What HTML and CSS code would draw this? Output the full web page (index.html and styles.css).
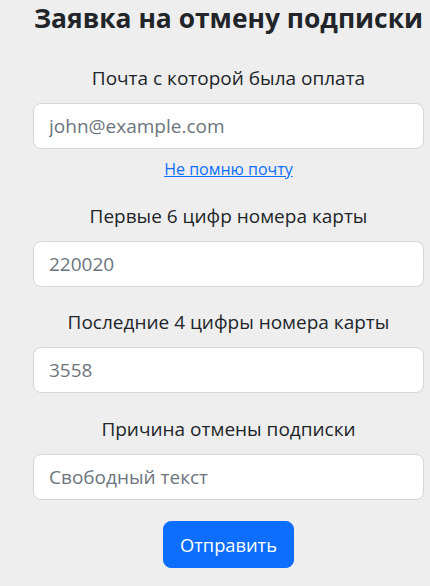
FILE: index.html
```html
<!DOCTYPE html>
<html lang="ru">
<head>
<meta charset="utf-8">
<title>Заявка на отмену подписки</title>
<link rel="stylesheet" href="styles.css">
</head>
<body>
<main class="container">
  <h1 class="title">Заявка на отмену подписки</h1>
  <form class="form">
    <div class="field">
      <label class="label" for="email">Почта с которой была оплата</label>
      <input class="input" id="email" type="text" placeholder="john@example.com">
      <a class="link" href="#">Не помню почту</a>
    </div>
    <div class="field">
      <label class="label" for="first">Первые 6 цифр номера карты</label>
      <input class="input" id="first" type="text" placeholder="220020">
    </div>
    <div class="field">
      <label class="label" for="last">Последние 4 цифры номера карты</label>
      <input class="input" id="last" type="text" placeholder="3558">
    </div>
    <div class="field">
      <label class="label" for="reason">Причина отмены подписки</label>
      <input class="input" id="reason" type="text" placeholder="Свободный текст">
    </div>
    <div class="actions">
      <button class="btn" type="button">Отправить</button>
    </div>
  </form>
</main>
</body>
</html>
```

FILE: styles.css
```css
* { box-sizing: border-box; }
html, body { margin: 0; padding: 0; }
body {
  background: #eeeeee;
  color: #212529;
  font-family: "Open Sans", "Noto Sans", sans-serif;
}
.container {
  width: 424px;
  padding-left: 33px;
}
.title {
  margin: 0;
  padding-top: 2px;
  font-size: 26.4px;
  line-height: 32px;
  font-weight: 700;
  text-align: center;
  white-space: nowrap;
}
.form {
  display: flex;
  flex-direction: column;
  margin-top: 31px;
}
.field {
  display: flex;
  flex-direction: column;
  margin-bottom: 22.5px;
}
.label {
  display: block;
  text-align: center;
  font-size: 19px;
  line-height: 27px;
  margin-bottom: 11px;
}
.input {
  display: block;
  width: 100%;
  height: 46px;
  padding: 0 15px;
  font-family: inherit;
  font-size: 19px;
  color: #212529;
  background: #fff;
  border: 1px solid #d3d6da;
  border-radius: 8px;
  outline: none;
}
.input::placeholder { color: #6c757d; opacity: 1; }
.link {
  align-self: center;
  margin-top: 8px;
  margin-bottom: -1px;
  font-size: 16px;
  line-height: 24px;
  color: #0d6efd;
  text-decoration: underline;
}
.actions {
  display: flex;
  justify-content: center;
  margin-top: -1.5px;
}
.btn {
  height: 47px;
  padding: 0 16px;
  font-family: inherit;
  font-size: 18.3px;
  color: #fff;
  background: #0d6efd;
  border: 1px solid #0d6efd;
  border-radius: 8px;
}
```
